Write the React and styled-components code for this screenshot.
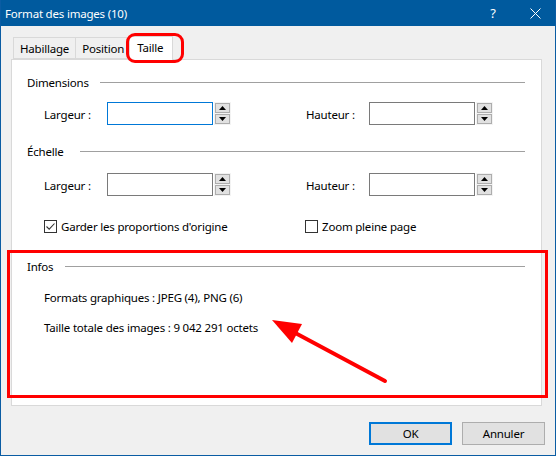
import React from 'react';
import styled, { createGlobalStyle } from 'styled-components';

const GlobalStyle = createGlobalStyle`
    html, body {
        margin: 0;
        padding: 0;
        background: #f0f0f0;
    }

    * {
        box-sizing: border-box;
    }
`;

const Window = styled.div`
    position: relative;
    width: 556px;
    height: 456px;
    display: flex;
    flex-direction: column;
    background: #f0f0f0;
    border: 1px solid #0a5ca3;
    border-top: 0;
    font-family: "Noto Sans", "Open Sans", sans-serif;
    font-size: 11.5px;
    letter-spacing: -0.2px;
    color: #000;
    overflow: hidden;
`;

const TitleBar = styled.div`
    height: 26px;
    display: flex;
    align-items: center;
    background: #005a9e;
    color: #fff;
    margin: 0 -1px;
    padding-left: 5px;
`;

const TitleText = styled.div`
    flex: 1;
    font-size: 11.5px;
`;

const CaptionButton = styled.div`
    width: 42px;
    height: 26px;
    display: flex;
    align-items: center;
    justify-content: center;
    font-size: 13px;
`;

const Body = styled.div`
    flex: 1;
    display: flex;
    flex-direction: column;
    padding: 9px 10px 0 10px;
`;

const TabStrip = styled.div`
    height: 24px;
    display: flex;
    align-items: flex-end;
    padding-left: 2px;
`;

const Tab = styled.div`
    height: ${p => (p.$active ? '24px' : '22px')};
    display: flex;
    align-items: center;
    padding: ${p => (p.$active ? '0 9px 2px 7px' : '0 6px')};
    margin-left: ${p => (p.$active ? '-2px' : '0')};
    margin-bottom: ${p => (p.$active ? '-1px' : '0')};
    background: ${p => (p.$active ? '#fff' : '#f0f0f0')};
    border: 1px solid #d9d9d9;
    border-bottom: ${p => (p.$active ? '0' : '1px solid #d9d9d9')};
    border-left: ${p => (p.$first || p.$active ? '1px solid #d9d9d9' : '0')};
    position: relative;
    z-index: ${p => (p.$active ? 1 : 0)};
`;

const Panel = styled.div`
    width: 531px;
    height: 347px;
    background: #fff;
    border: 1px solid #d9d9d9;
    padding: 14px 16px 0 15px;
    display: flex;
    flex-direction: column;
`;

const GroupHeader = styled.div`
    height: 16px;
    display: flex;
    align-items: center;
    margin-top: ${p => p.$top || 0}px;
`;

const GroupLine = styled.div`
    flex: 1;
    height: 1px;
    background: #a0a0a0;
    margin-left: ${p => p.$gap}px;
`;

const FieldRow = styled.div`
    display: grid;
    grid-template-columns: 63px 106px 18px 75px 63px 106px 18px;
    align-items: center;
    padding-left: 17px;
    margin-top: ${p => p.$top}px;
    height: 23px;
`;

const FieldLabel = styled.div`
    padding-top: 2px;
`;

const TextBox = styled.div`
    height: 23px;
    background: #fff;
    border: 1px solid ${p => (p.$focused ? '#0078d7' : '#7a7a7a')};
`;

const Spinner = styled.div`
    height: 23px;
    margin-left: 1px;
    padding: 1px;
    background: #f3f3f3;
    display: flex;
    flex-direction: column;
    justify-content: space-between;
`;

const SpinButton = styled.div`
    height: 10px;
    width: 15px;
    background: #e1e1e1;
    border: 1px solid #adadad;
    display: flex;
    align-items: center;
    justify-content: center;
`;

const CheckRow = styled.div`
    display: grid;
    grid-template-columns: 261px 1fr;
    padding-left: 17px;
    margin-top: 23px;
    height: 14px;
    align-items: center;
`;

const CheckItem = styled.div`
    display: flex;
    align-items: center;
    gap: 4px;
`;

const CheckBox = styled.div`
    width: 13px;
    height: 13px;
    border: 1px solid #333;
    background: #fff;
    display: flex;
    align-items: center;
    justify-content: center;
`;

const InfoLine = styled.div`
    padding-left: 17px;
    height: 16px;
    line-height: 16px;
    margin-top: ${p => p.$top}px;
`;

const Footer = styled.div`
    display: flex;
    justify-content: flex-end;
    gap: 10px;
    margin-top: 16px;
`;

const Button = styled.div`
    width: 83px;
    height: 23px;
    display: flex;
    align-items: center;
    justify-content: center;
    background: #e1e1e1;
    border: ${p => (p.$default ? '2px solid #0078d7' : '1px solid #adadad')};
`;

const TabMark = styled.div`
    position: absolute;
    left: 125px;
    top: 33px;
    width: 58px;
    height: 30px;
    border: 3px solid #f00;
    border-radius: 9px;
    pointer-events: none;
    z-index: 5;
`;

const InfoMark = styled.div`
    position: absolute;
    left: 6px;
    top: 250px;
    width: 541px;
    height: 148px;
    border: 3px solid #f00;
    pointer-events: none;
    z-index: 5;
`;

const ArrowLayer = styled.svg`
    position: absolute;
    left: 0;
    top: 0;
    width: 556px;
    height: 456px;
    pointer-events: none;
    z-index: 6;
`;

const Triangle = ({ up }) => (
    <svg width="7" height="4" viewBox="0 0 7 4">
        <polygon points={up ? '3.5,0 7,4 0,4' : '0,0 7,0 3.5,4'} fill="#000" />
    </svg>
);

const Spin = () => (
    <Spinner>
        <SpinButton><Triangle up /></SpinButton>
        <SpinButton><Triangle /></SpinButton>
    </Spinner>
);

const SizeRow = ({ top, focused }) => (
    <FieldRow $top={top}>
        <FieldLabel>Largeur :</FieldLabel>
        <TextBox $focused={focused} />
        <Spin />
        <span />
        <FieldLabel>Hauteur :</FieldLabel>
        <TextBox />
        <Spin />
    </FieldRow>
);

const Check = ({ checked, children }) => (
    <CheckItem>
        <CheckBox>
            {checked && (
                <svg width="11" height="11" viewBox="0 0 11 11">
                    <polyline points="1.5,5.5 4.2,8.2 9.5,2.5" fill="none" stroke="#333" strokeWidth="1.1" />
                </svg>
            )}
        </CheckBox>
        <span>{children}</span>
    </CheckItem>
);

const App = () => (
    <>
        <GlobalStyle />
        <Window>
            <TitleBar>
                <TitleText>Format des images (10)</TitleText>
                <CaptionButton>?</CaptionButton>
                <CaptionButton>
                    <svg width="11" height="11" viewBox="0 0 11 11">
                        <path d="M0.5 0.5 L10.5 10.5 M10.5 0.5 L0.5 10.5" stroke="#fff" strokeWidth="1" />
                    </svg>
                </CaptionButton>
            </TitleBar>
            <Body>
                <TabStrip>
                    <Tab $first>Habillage</Tab>
                    <Tab>Position</Tab>
                    <Tab $active>Taille</Tab>
                </TabStrip>
                <Panel>
                    <GroupHeader>
                        Dimensions
                        <GroupLine $gap={11} />
                    </GroupHeader>
                    <SizeRow top={12} focused />
                    <GroupHeader $top={18}>
                        Échelle
                        <GroupLine $gap={16} />
                    </GroupHeader>
                    <SizeRow top={14} />
                    <CheckRow>
                        <Check checked>Garder les proportions d'origine</Check>
                        <Check>Zoom pleine page</Check>
                    </CheckRow>
                    <GroupHeader $top={25}>
                        Infos
                        <GroupLine $gap={12} />
                    </GroupHeader>
                    <InfoLine $top={16}>Formats graphiques : JPEG (4), PNG (6)</InfoLine>
                    <InfoLine $top={14}>Taille totale des images : 9 042 291 octets</InfoLine>
                </Panel>
                <Footer>
                    <Button $default>OK</Button>
                    <Button>Annuler</Button>
                </Footer>
            </Body>
            <TabMark />
            <InfoMark />
            <ArrowLayer viewBox="0 0 556 456">
                <line x1="384" y1="381" x2="285" y2="328" stroke="#f00" strokeWidth="4" strokeLinecap="round" />
                <polygon points="271,320 301,324 291,343" fill="#f00" />
            </ArrowLayer>
        </Window>
    </>
);

export default App;
